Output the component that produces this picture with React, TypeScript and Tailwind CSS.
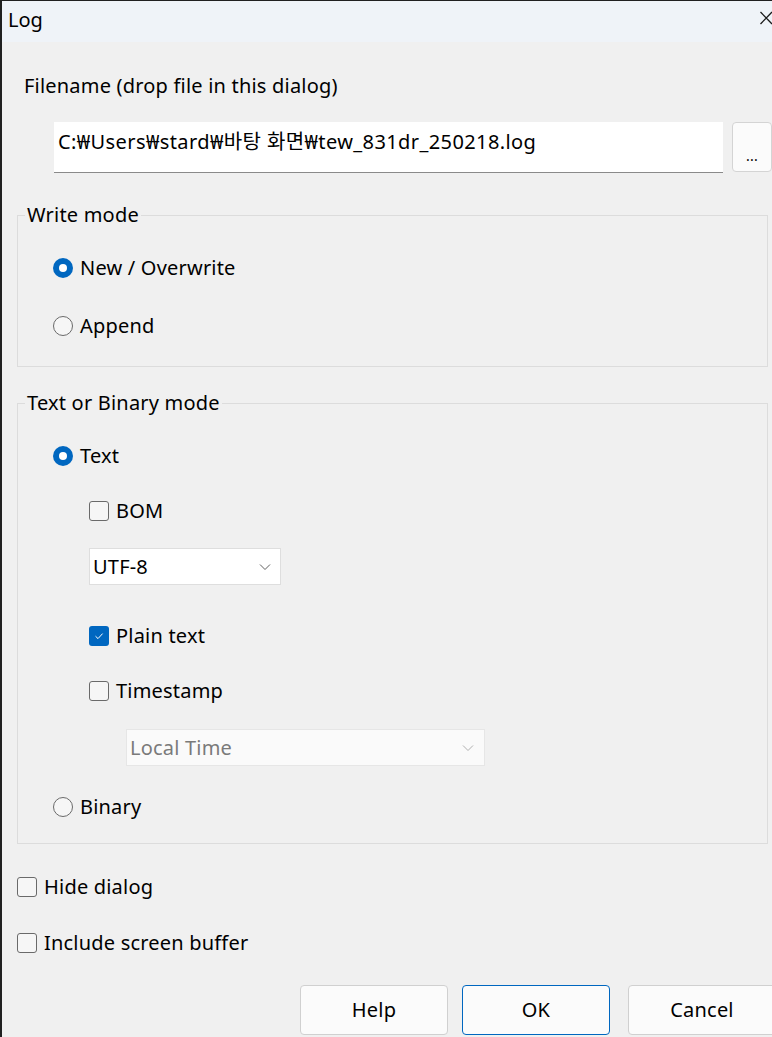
import React from 'react';

const font = { fontFamily: '"Noto Sans", "Noto Sans CJK KR", sans-serif' };

function Radio({ checked, label }: { checked?: boolean; label: string }) {
  return (
    <div className="flex items-center h-[30px]">
      {checked ? (
        <span className="w-[20px] h-[20px] shrink-0 rounded-full bg-[#0067c0] flex items-center justify-center">
          <span className="w-[8px] h-[8px] rounded-full bg-white" />
        </span>
      ) : (
        <span className="w-[20px] h-[20px] shrink-0 rounded-full border border-[#6a6a6a] bg-[#f6f6f6]" />
      )}
      <span className="ml-[7px]">{label}</span>
    </div>
  );
}

function Check({ checked, label }: { checked?: boolean; label: string }) {
  return (
    <div className="flex items-center h-[30px]">
      {checked ? (
        <span className="w-[20px] h-[20px] shrink-0 rounded-[3px] bg-[#0067c0] flex items-center justify-center">
          <svg width="12" height="12" viewBox="0 0 12 12" fill="none">
            <path d="M2.5 6.2 L5 8.6 L9.6 3.6" stroke="white" strokeWidth="1" />
          </svg>
        </span>
      ) : (
        <span className="w-[20px] h-[20px] shrink-0 rounded-[3px] border border-[#6a6a6a] bg-[#f6f6f6]" />
      )}
      <span className="ml-[7px]">{label}</span>
    </div>
  );
}

function Chevron({ color }: { color: string }) {
  return (
    <svg width="12" height="8" viewBox="0 0 12 8" fill="none">
      <path d="M1 1.5 L6 6.5 L11 1.5" stroke={color} strokeWidth="1" />
    </svg>
  );
}

export default function App() {
  return (
    <div
      className="w-[772px] h-[1037px] overflow-hidden bg-[#f0f0f0] border-l-2 border-t border-[#202020] text-[20px] tracking-[0.2px] text-black flex flex-col"
      style={font}
    >
      {/* TITLE BAR */}
      <div className="h-[41px] shrink-0 bg-[#eff3f8] flex items-center justify-between pl-[6px]">
        <span className="text-[20px] tracking-normal leading-none -mt-[4px]">Log</span>
        <svg className="-mt-[8px]" width="12" height="14" viewBox="0 0 12 14" fill="none">
          <path d="M0.5 1 L12 13 M12 1 L0.5 13" stroke="#1a1a1a" strokeWidth="1.3" />
        </svg>
      </div>

      {/* BODY */}
      <div className="flex flex-col pt-[29px]">
        <div className="pl-[22px] leading-[30px]">Filename (drop file in this dialog)</div>

        <div className="flex mt-[21px] pl-[52px]">
          <div className="w-[670px] h-[51px] bg-white border-b border-[#8a8a8a] flex items-start pt-[5px] pl-[4px] tracking-[0.4px]">
            C:₩Users₩stard₩바탕 화면₩tew_831dr_250218.log
          </div>
          <div className="ml-[9px] w-[40px] h-[50px] bg-[#fbfbfb] border border-[#d4d4d4] rounded-[4px] flex items-end justify-center pb-[8px] text-[14px] leading-none">
            ...
          </div>
        </div>

        {/* WRITE MODE */}
        <fieldset className="mt-[30px] ml-[15px] w-[751px] border border-[#dcdcdc] pb-[25px]">
          <legend className="ml-[7px] px-[2px] leading-[24px]">Write mode</legend>
          <div className="pl-[35px] mt-[26px]">
            <Radio checked label="New / Overwrite" />
          </div>
          <div className="pl-[35px] mt-[28px]">
            <Radio label="Append" />
          </div>
        </fieldset>

        {/* TEXT OR BINARY */}
        <fieldset className="mt-[24px] ml-[15px] w-[751px] border border-[#dcdcdc] pb-[21px]">
          <legend className="ml-[7px] px-[2px] leading-[24px]">Text or Binary mode</legend>
          <div className="pl-[35px] mt-[26px]">
            <Radio checked label="Text" />
          </div>
          <div className="pl-[71px] mt-[25px]">
            <Check label="BOM" />
          </div>
          <div className="pl-[71px] mt-[22px]">
            <div className="w-[192px] h-[37px] bg-white border border-[#dedede] flex items-center justify-between pl-[3px] pr-[9px]">
              <span>UTF-8</span>
              <Chevron color="#606060" />
            </div>
          </div>
          <div className="pl-[71px] mt-[36px]">
            <Check checked label="Plain text" />
          </div>
          <div className="pl-[71px] mt-[25px]">
            <Check label="Timestamp" />
          </div>
          <div className="pl-[108px] mt-[23px]">
            <div className="w-[359px] h-[37px] bg-[#fafafa] border border-[#e6e6e6] flex items-center justify-between pl-[3px] pr-[10px] text-[#7a7a7a]">
              <span>Local Time</span>
              <Chevron color="#b0b0b0" />
            </div>
          </div>
          <div className="pl-[35px] mt-[26px]">
            <Radio label="Binary" />
          </div>
        </fieldset>

        <div className="pl-[15px] mt-[28px]">
          <Check label="Hide dialog" />
        </div>
        <div className="pl-[15px] mt-[26px]">
          <Check label="Include screen buffer" />
        </div>

        {/* BUTTONS */}
        <div className="flex mt-[27px] pl-[298px]">
          <button className="w-[148px] h-[50px] shrink-0 bg-[#fbfbfb] border border-[#d0d0d0] rounded-[4px]">Help</button>
          <button className="ml-[14px] w-[148px] h-[50px] shrink-0 bg-[#fbfbfb] border border-[#0067c0] rounded-[4px]">OK</button>
          <button className="ml-[18px] w-[148px] h-[50px] shrink-0 bg-[#fbfbfb] border border-[#d0d0d0] rounded-[4px]">Cancel</button>
        </div>
      </div>
    </div>
  );
}
